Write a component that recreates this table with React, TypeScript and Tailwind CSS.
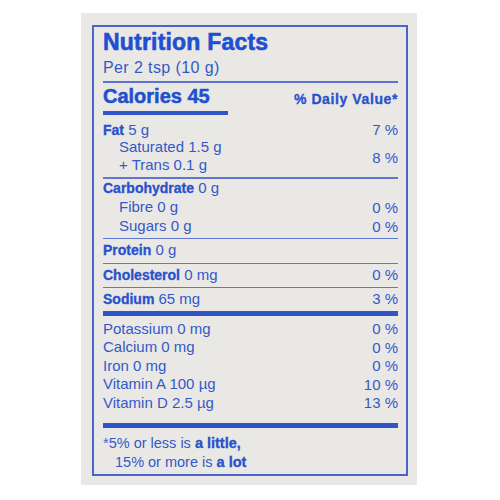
import React from "react";

type RowProps = {
  hc: string;
  bold?: string;
  text?: string;
  value?: string;
  indent?: boolean;
};

function Row({ hc, bold, text, value, indent }: RowProps) {
  return (
    <div className={`${hc} flex items-center justify-between leading-none`}>
      <div className={indent ? "pl-[16px]" : ""}>
        {bold && <span className="text-[14px] font-bold text-[#2851cb] [-webkit-text-stroke:0.3px_#2851cb]">{bold}</span>}
        {text && <span className="text-[15px]">{text}</span>}
      </div>
      {value && <span className="text-[15px]">{value}</span>}
    </div>
  );
}

function Thin({ mt }: { mt: string }) {
  return <div className={`${mt} h-[1.5px] bg-[#5f76d3]`} />;
}

export default function App() {
  return (
    <div className="w-[500px] h-[500px] bg-white pt-[13px] pl-[81px] font-['Liberation_Sans',Arial,sans-serif] text-[#3359c9]">
      <div className="w-[336px] h-[472px] bg-[#eae8e5] pt-[12px] pl-[11px]">
        <div className="w-[316px] h-[451px] border-2 border-[#4b63cc] pl-[9px] pr-[8px] flex flex-col">
          <div className="h-[30px] flex items-center text-[23px] font-bold leading-none text-[#1f4fd2] tracking-[0.2px] [-webkit-text-stroke:0.6px_#1f4fd2]">
            Nutrition Facts
          </div>
          <div className="h-[22px] flex items-center text-[16px] leading-none tracking-[0.4px]">
            Per 2 tsp (10 g)
          </div>
          <div className="mt-[2px] h-[2px] bg-[#5a72d2]" />
          <div className="h-[26px] flex items-center justify-between leading-none">
            <span className="text-[20px] font-bold text-[#2150cf] [-webkit-text-stroke:0.5px_#2150cf]">Calories 45</span>
            <span className="mt-[5px] text-[14px] font-bold tracking-[0.6px] text-[#2851cb] [-webkit-text-stroke:0.3px_#2851cb]">% Daily Value*</span>
          </div>
          <div className="mt-[2px] h-[4px] w-[125px] bg-[#2f55c8]" />

          <div className="mt-[5.75px]">
            <Row hc="h-[17.5px]" bold="Fat" text=" 5 g" value="7 %" />
            <div className="flex justify-between">
              <div>
                <Row hc="h-[17.5px]" text="Saturated 1.5 g" indent />
                <Row hc="h-[17.5px]" text="+ Trans 0.1 g" indent />
              </div>
              <div className="flex items-center pt-[4px] text-[15px] leading-none">8 %</div>
            </div>
          </div>
          <Thin mt="mt-[4px]" />

          <Row hc="h-[19px]" bold="Carbohydrate" text=" 0 g" />
          <Row hc="h-[19px]" text="Fibre 0 g" value="0 %" indent />
          <Row hc="h-[19px]" text="Sugars 0 g" value="0 %" indent />
          <Thin mt="mt-[2px]" />

          <Row hc="h-[22px]" bold="Protein" text=" 0 g" />
          <Thin mt="mt-[1.5px]" />
          <Row hc="h-[21px]" bold="Cholesterol" text=" 0 mg" value="0 %" />
          <Thin mt="mt-[1.5px]" />
          <Row hc="h-[21px]" bold="Sodium" text=" 65 mg" value="3 %" />
          <div className="mt-[2px] h-[5px] bg-[#2f55c8]" />

          <div className="mt-[3px]">
            <Row hc="h-[18.5px]" text="Potassium 0 mg" value="0 %" />
            <Row hc="h-[18.5px]" text="Calcium 0 mg" value="0 %" />
            <Row hc="h-[18.5px]" text="Iron 0 mg" value="0 %" />
            <Row hc="h-[18.5px]" text="Vitamin A 100 µg" value="10 %" />
            <Row hc="h-[18.5px]" text="Vitamin D 2.5 µg" value="13 %" />
          </div>
          <div className="mt-[11px] h-[5px] bg-[#2f55c8]" />

          <div className="mt-[6px] text-[14.5px] leading-none">
            <div className="h-[19px] flex items-center">
              <span>
                <span className="text-[#4b63cc]">*</span>5% or less is{" "}
                <span className="font-bold text-[#2851cb] [-webkit-text-stroke:0.3px_#2851cb]">a little,</span>
              </span>
            </div>
            <div className="h-[19px] flex items-center pl-[12px]">
              <span>
                15% or more is{" "}
                <span className="font-bold text-[#2851cb] [-webkit-text-stroke:0.3px_#2851cb]">a lot</span>
              </span>
            </div>
          </div>
        </div>
      </div>
    </div>
  );
}
